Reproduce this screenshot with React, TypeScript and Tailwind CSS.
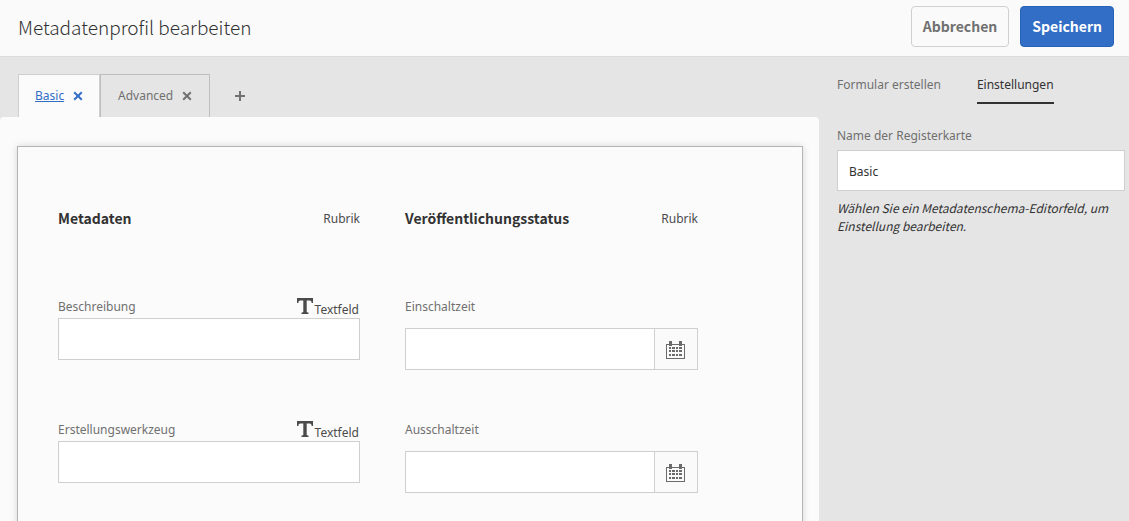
import { useState } from 'react';

function CloseIcon() {
  return (
    <svg viewBox="0 0 10 10" className="size-[10px]" fill="none" stroke="currentColor" strokeWidth="2" aria-hidden="true">
      <path d="M1.2 1.2 8.8 8.8M8.8 1.2 1.2 8.8" />
    </svg>
  );
}

function PlusIcon() {
  return (
    <svg viewBox="0 0 10 10" className="size-[10px]" fill="none" stroke="currentColor" strokeWidth="2" aria-hidden="true">
      <path d="M5 0v10M0 5h10" />
    </svg>
  );
}

function TextIcon() {
  return (
    <svg viewBox="0 0 16 16" className="h-4 w-4" fill="#4b4b4b" aria-hidden="true">
      <path d="M0 0h16v5h-1.400C14.500 3.200 14 2.500 12.500 2.500H9.700v11c0 .6.5 1 1.800 1V16h-7v-1.500c1.300 0 1.800-.4 1.800-1v-11H3.500C2 2.500 1.500 3.200 1.400 5H0z" />
    </svg>
  );
}

function CalendarIcon() {
  return (
    <svg viewBox="0 0 19 18" className="h-[18px] w-[19px]" fill="#6b6b6b" aria-hidden="true">
      <path fillRule="evenodd" d="M0 3h19v15H0zM1 4v13h17V4z" />
      <path d="M3 0h3v5H3zM13 0h3v5h-3z" />
      <path d="M3 6h2v2H3zM6 6h3v2H6zM10 6h2v2h-2zM13 6h3v2h-3zM3 9h2v2H3zM6 9h3v2H6zM10 9h2v2h-2zM13 9h3v2h-3zM3 13h2v2H3zM6 13h3v2H6zM10 13h2v2h-2zM13 13h3v2h-3z" />
    </svg>
  );
}

function SectionHeading({ title }: { title: string }) {
  return (
    <div className="flex h-5 items-start justify-between">
      <h2 className="font-['Noto_Sans_CJK_SC',sans-serif] text-[14px] leading-5 font-bold text-[#323232]">{title}</h2>
      <span className="text-[12px] leading-[22px] text-[#4b4b4b]">Rubrik</span>
    </div>
  );
}

function TextField({ id, label }: { id: string; label: string }) {
  return (
    <div className="h-[123px]">
      <div className="flex h-[22px] items-start justify-between">
        <label htmlFor={id} className="text-[12px] leading-[22px] text-[#707070]">{label}</label>
        <span className="flex items-start gap-0.5 pt-0.5 pr-px">
          <TextIcon />
          <span className="pt-px text-[12px] leading-[22px] text-[#4b4b4b]">Textfeld</span>
        </span>
      </div>
      <input id={id} type="text" className="h-[42px] w-full border border-[#cfcfcf] bg-white px-3 text-[12px] outline-none" />
    </div>
  );
}

function DateField({ id, label }: { id: string; label: string }) {
  return (
    <div className="h-[123px]">
      <label htmlFor={id} className="flex h-8 text-[12px] leading-[22px] text-[#707070]">{label}</label>
      <div className="flex h-[42px]">
        <input id={id} type="text" className="min-w-0 flex-1 border border-[#cfcfcf] bg-white px-3 text-[12px] outline-none" />
        <button type="button" aria-label="Kalender" className="flex w-[43px] items-center justify-center border border-l-0 border-[#cfcfcf] bg-[#fafafa] pt-0.5 pr-0.5">
          <CalendarIcon />
        </button>
      </div>
    </div>
  );
}

export default function App() {
  const [tabName, setTabName] = useState('Basic');
  return (
    <div className="flex min-h-screen flex-col bg-[#e5e5e5] font-['Noto_Sans',sans-serif] text-[#323232]">
      <header className="flex h-[57px] items-center justify-between border-b border-[#dcdcdc] bg-[#fafafa] pr-[15px] pb-1 pl-[18px] font-['Noto_Sans_CJK_SC',sans-serif]">
        <h1 className="pt-0.5 text-[19px] leading-7 font-light">Metadatenprofil bearbeiten</h1>
        <div className="flex gap-[11px]">
          <button type="button" className="h-[41px] rounded border border-[#d0d0d0] bg-[#fafafa] px-[11px] pt-px text-[14px] font-bold text-[#707070]">Abbrechen</button>
          <button type="button" className="h-[41px] rounded border border-[#2662b8] bg-[#326ec6] px-[11px] pt-px text-[14px] font-bold text-white">Speichern</button>
        </div>
      </header>

      <div className="flex flex-1">
        <main className="flex flex-1 flex-col pt-[17px]">
          <nav className="flex h-[43px] pl-[18px] text-[12px]">
            <div className="flex w-[82px] items-center gap-[9px] border border-b-0 border-[#cfcfcf] bg-[#fbfbfb] pl-4 text-[#326ec6]">
              <a href="#basic" className="leading-5 underline">Basic</a>
              <button type="button" aria-label="Basic schließen"><CloseIcon /></button>
            </div>
            <div className="flex w-[110px] items-center gap-[9px] border border-b-0 border-[#bebebe] pl-[17px] text-[#707070]">
              <a href="#advanced" className="leading-5">Advanced</a>
              <button type="button" aria-label="Advanced schließen"><CloseIcon /></button>
            </div>
            <button type="button" aria-label="Registerkarte hinzufügen" className="ml-[25px] text-[#707070]"><PlusIcon /></button>
          </nav>

          <div className="flex flex-1 flex-col rounded-t bg-[#fbfbfb] pt-[29px] pr-4 pl-[17px]">
            <section className="grid flex-1 grid-cols-[302fr_293fr] gap-x-[45px] border border-b-0 border-[#b4b4b4] pt-[61px] pr-[104px] pl-10 shadow-[0_0_7px_rgba(0,0,0,0.15)]">
              <div>
                <SectionHeading title="Metadaten" />
                <div className="pt-[68px]">
                  <TextField id="beschreibung" label="Beschreibung" />
                  <TextField id="werkzeug" label="Erstellungswerkzeug" />
                </div>
              </div>
              <div>
                <SectionHeading title="Veröffentlichungsstatus" />
                <div className="pt-[68px]">
                  <DateField id="einschaltzeit" label="Einschaltzeit" />
                  <DateField id="ausschaltzeit" label="Ausschaltzeit" />
                </div>
              </div>
            </section>
          </div>
        </main>

        <aside className="w-[310px] pt-[17px] pr-1 pl-[18px] text-[12px]">
          <nav className="flex gap-9">
            <a href="#formular" className="h-[30px] leading-[22px] text-[#707070]">Formular erstellen</a>
            <a href="#einstellungen" className="h-[30px] border-b-2 border-[#323232] leading-[22px]">Einstellungen</a>
          </nav>
          <label htmlFor="tabname" className="mt-[21px] block h-[25px] leading-[22px] text-[#707070]">Name der Registerkarte</label>
          <input id="tabname" type="text" value={tabName} onChange={(e) => setTabName(e.target.value)} className="h-[41px] w-full border border-[#cfcfcf] bg-white px-[11px] pt-0.5 outline-none" />
          <p className="mt-2 font-['Noto_Sans_CJK_SC',sans-serif] leading-[18px] italic">Wählen Sie ein Metadatenschema-Editorfeld, um Einstellung bearbeiten.</p>
        </aside>
      </div>
    </div>
  );
}
